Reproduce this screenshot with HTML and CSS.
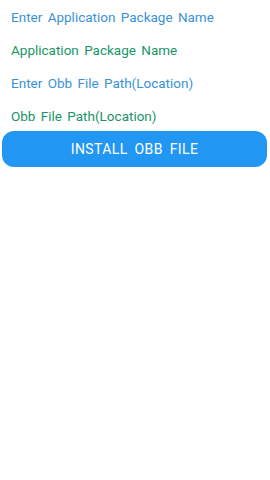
FILE: index.html
```html
<!DOCTYPE html>
<html>
<head>
<meta charset="utf-8">
<link rel="stylesheet" href="styles.css">
</head>
<body>
<div class="form">
  <div class="field hint">Enter Application Package Name</div>
  <div class="field value">Application Package Name</div>
  <div class="field hint">Enter Obb File Path(Location)</div>
  <div class="field value">Obb File Path(Location)</div>
  <button class="install">INSTALL OBB FILE</button>
</div>
</body>
</html>
```
FILE: styles.css
```css
html, body {
  margin: 0;
  padding: 0;
  background: #ffffff;
  width: 270px;
  height: 480px;
}
.form {
  display: flex;
  flex-direction: column;
  padding: 2px 3px 0 2px;
}
.field {
  font-family: Roboto, "Noto Sans", sans-serif;
  font-size: 13.5px;
  letter-spacing: 0;
  word-spacing: 2px;
  height: 33px;
  line-height: 30px;
  padding-left: 9px;
}
.hint { color: #3a92d6; }
.value { color: #1a9467; }
.install {
  margin-top: -3px;
  height: 36px;
  border: none;
  border-radius: 12px;
  background: #2196f3;
  color: #ffffff;
  font-family: Roboto, "Noto Sans", sans-serif;
  font-size: 14px;
  letter-spacing: 0.4px;
  word-spacing: 3px;
  padding: 0;
}
```
